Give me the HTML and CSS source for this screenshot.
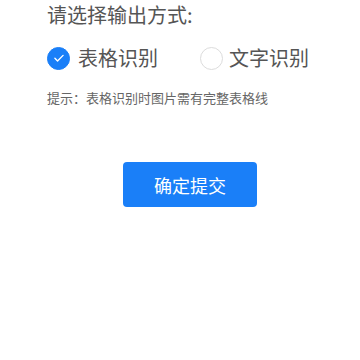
FILE: index.html
```html
<!DOCTYPE html>
<html lang="zh-CN">
<head>
    <meta charset="UTF-8">
    <title>输出方式</title>
    <meta name="viewport" content="width=device-width, initial-scale=1.0">
    <link rel="stylesheet" href="styles.css">
</head>
<body>
<div class="container">
    <h1 class="title">请选择输出方式:</h1>

    <div class="options">
        <label class="option option-first">
            <span class="radio checked">
                <svg viewBox="0 0 24 24" width="14" height="14"><path d="M5 12.5l4.5 4.5L19 7.5" fill="none" stroke="#fff" stroke-width="2.4" stroke-linecap="round" stroke-linejoin="round"/></svg>
            </span>
            <span class="option-text">表格识别</span>
        </label>
        <label class="option">
            <span class="radio"></span>
            <span class="option-text">文字识别</span>
        </label>
    </div>

    <p class="hint">提示：表格识别时图片需有完整表格线</p>

    <button class="submit">确定提交</button>
</div>
</body>
</html>
```

FILE: styles.css
```css
body { margin: 0; padding: 0; background: #fff; font-family: "Noto Sans CJK SC", "Noto Sans", sans-serif; }
.container { padding-left: 47px; }
.title { margin: 0; font-size: 20px; font-weight: normal; line-height: 30px; color: #555; }
.options { display: flex; align-items: center; height: 24px; margin-top: 16px; }
.option { display: flex; align-items: center; }
.option-first { margin-right: 42px; }
.radio {
    width: 21px; height: 21px; border-radius: 50%; border: 1px solid #dcdcdc; box-sizing: content-box;
    display: flex; align-items: center; justify-content: center; margin-right: 6px;
}
.radio.checked { background: #1a7ff8; border-color: #1a7ff8; margin-right: 8px; }
.option-text { font-size: 20px; color: #555; line-height: 24px; }
.hint { margin: 18px 0 0; font-size: 13px; line-height: 20px; color: #666; }
.submit {
    display: block; margin: 54px 0 0 76px; width: 134px; height: 45px;
    background: #1a7ff8; color: #fff; border: none; border-radius: 4px;
    font-family: inherit; font-size: 18px; cursor: pointer;
}
```
